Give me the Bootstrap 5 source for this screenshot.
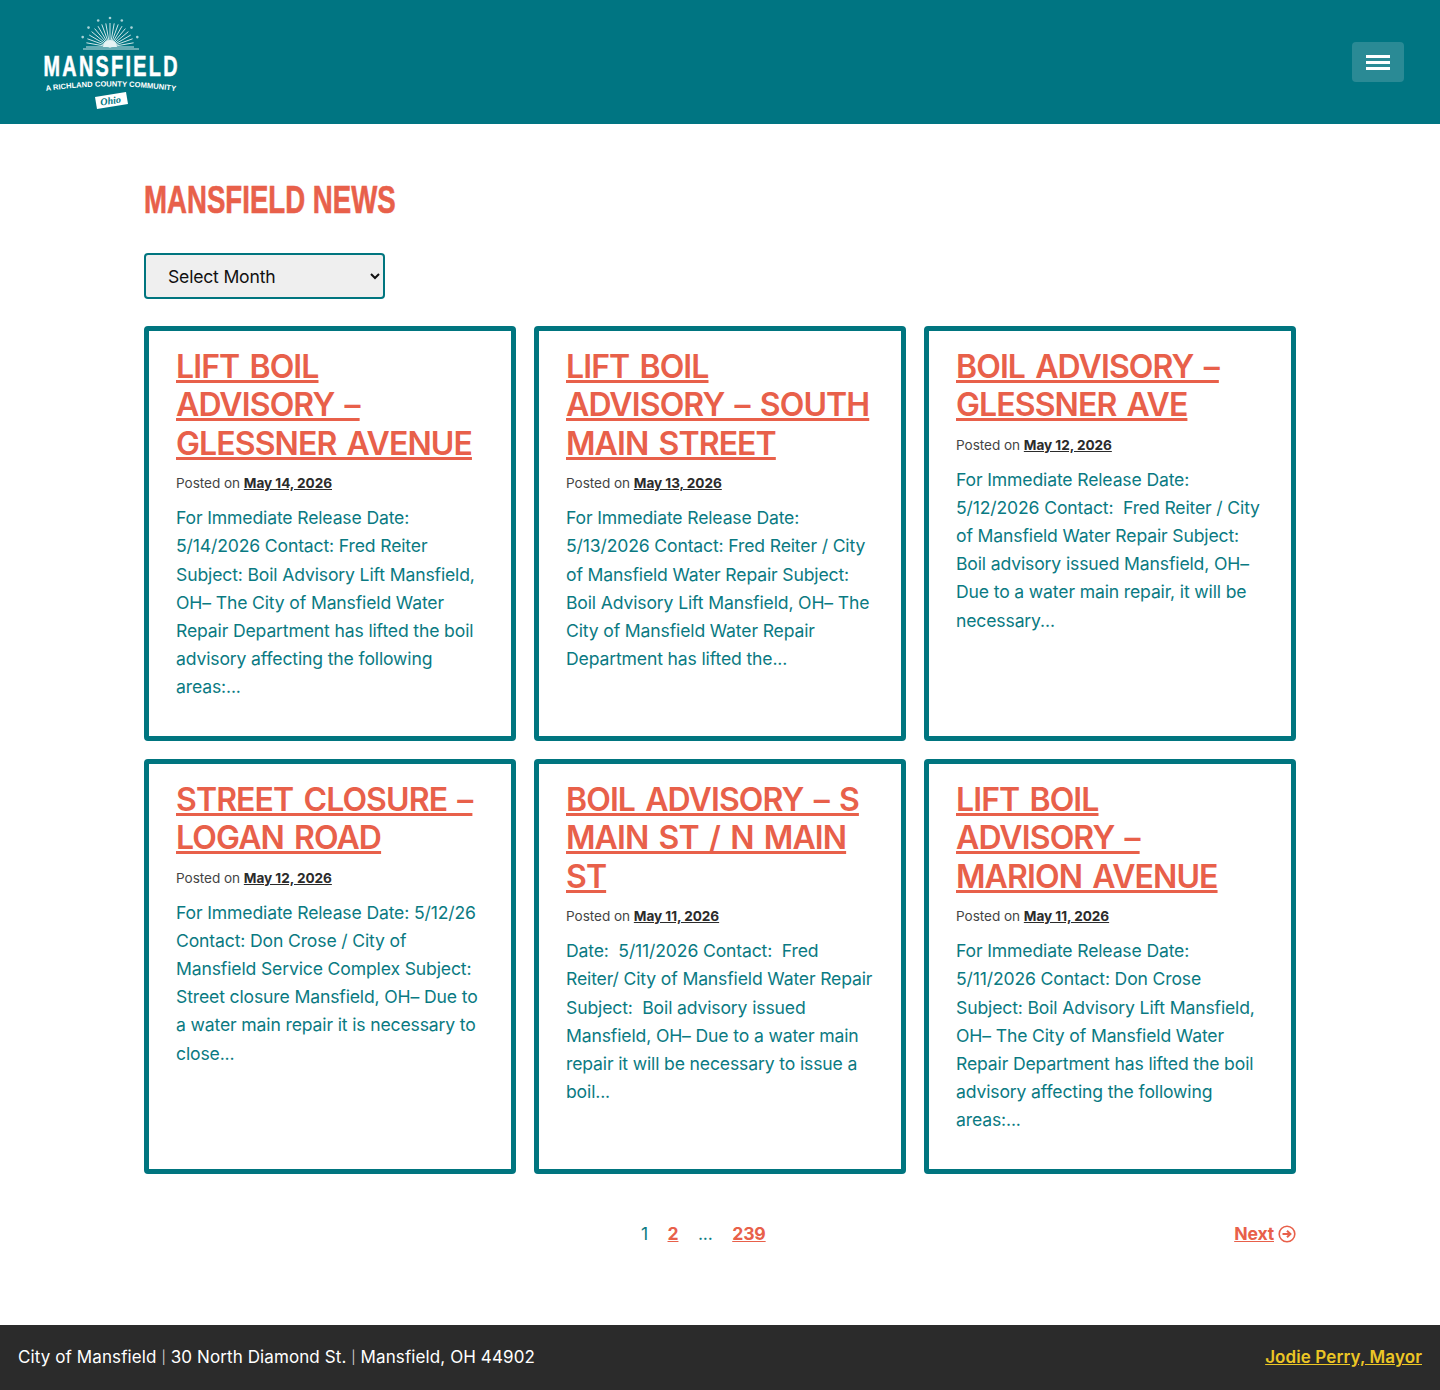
<!DOCTYPE html>
<html lang="en">
<head>
    <meta charset="UTF-8">
    <meta name="viewport" content="width=device-width, initial-scale=1.0">
    <title>Mansfield News</title>
    <link rel="stylesheet" href="https://cdn.jsdelivr.net/npm/bootstrap@5.3.3/dist/css/bootstrap.min.css">
    <style>
        body {
            font-family: "Inter", "Liberation Sans", sans-serif;
            font-size: 17.6px;
            line-height: 1.6;
            letter-spacing: -0.15px;
            color: #0a7a82;
        }
        .site-header {
            height: 124px;
            background-color: #007582;
            padding: 0 36px 0 43px;
        }
        .menu-btn {
            width: 52px;
            height: 40px;
            background-color: #2a8a95;
            border: 0;
            border-radius: 4px;
        }
        .menu-btn span {
            display: block;
            width: 24px;
            height: 3px;
            background-color: #fff;
            margin: 1.5px auto;
        }
        .logo { display: block; }
        .logo text { fill: #fff; letter-spacing: 0; }
        .main-wrap { width: 1152px; margin: 0 auto; padding-top: 54px; }
        h1.page-title {
            font-family: "Liberation Sans", sans-serif;
            font-weight: 700;
            font-size: 38px;
            line-height: 44px;
            letter-spacing: 0;
            color: #e8604a;
            margin: 0 0 31px;
            text-transform: uppercase;
            transform: scaleX(.727);
            transform-origin: left center;
            -webkit-text-stroke: .6px #e8604a;
        }
        .month-select {
            width: 241px;
            height: 46px;
            background-color: #efefef;
            border: 2px solid #00757f;
            border-radius: 4px;
            padding: 0 0 0 18px;
            font-size: 17.6px;
            letter-spacing: -0.2px;
            color: #111;
            display: block;
        }
        .news-grid {
            display: grid;
            grid-template-columns: repeat(3, 372px);
            grid-auto-rows: 415px;
            gap: 18px;
            margin-top: 27px;
        }
        .news-card {
            border: 5px solid #00757f;
            border-radius: 4px;
            padding: 17px 27px 0;
            background: #fff;
        }
        .news-card h2 {
            font-size: 32px;
            line-height: 38.4px;
            font-weight: 600;
            letter-spacing: -0.9px;
            word-spacing: 3px;
            margin: 0 0 9px;
            text-transform: uppercase;
        }
        .news-card h2 a, .pager a { color: #e8604a; }
        .meta {
            font-size: 13.6px;
            line-height: 22px;
            letter-spacing: -0.05px;
            color: #444;
            margin-bottom: 10px;
        }
        .meta a { color: #2b2b2b; font-weight: 700; }
        .news-card p { margin: 0; line-height: 28.16px; }
        .pager {
            height: 30px;
            margin-top: 45px;
            font-size: 17.6px;
            font-weight: 700;
        }
        .pager .pages { margin-left: 497px; gap: 19.5px; }
        .pager .pages span { font-weight: 400; }
        .site-footer {
            height: 65px;
            margin-top: 76px;
            background-color: #2b2b2b;
            color: #fff;
            font-size: 17px;
            letter-spacing: .1px;
            padding: 0 18px;
        }
        .site-footer .sep { font-size: 13px; color: #ccc; vertical-align: 1px; }
        .site-footer a { color: #ecc625; font-weight: 600; }
    </style>
</head>
<body>

    <header class="site-header d-flex justify-content-between align-items-center">
        <a href="#" class="logo">
            <svg width="138" height="96" viewBox="0 0 138 96">
                <g stroke="#cfe6e8" stroke-width="1" fill="none">
                    <path d="M67 33 L91 33 M67 33 L90.6 28.8 M67 33 L89.6 24.8 M67 33 L87.8 21 M67 33 L85.4 17.6 M67 33 L82.4 14.6 M67 33 L79 12.2 M67 33 L75.2 10.4 M67 33 L71.2 9.4 M67 33 L67 9 M67 33 L62.8 9.4 M67 33 L58.8 10.4 M67 33 L55 12.2 M67 33 L51.6 14.6 M67 33 L48.6 17.6 M67 33 L46.2 21 M67 33 L44.4 24.8 M67 33 L43.4 28.8 M67 33 L43 33"/>
                    <path d="M40 35 H96" stroke-width="1.2"/>
                </g>
                <g fill="#a9d3d7">
                    <circle cx="67" cy="4" r="1.3"/><circle cx="55.2" cy="6.5" r="1.3"/><circle cx="78.8" cy="6.5" r="1.3"/>
                    <circle cx="45.5" cy="13.6" r="1.3"/><circle cx="88.5" cy="13.6" r="1.3"/>
                    <circle cx="39.7" cy="23.1" r="1.3"/><circle cx="94.3" cy="23.1" r="1.3"/>
                </g>
                <path d="M60 33 a7 7 0 0 1 14 0 Z" fill="#e6f3f4"/>
                <text transform="translate(0.5 62) scale(.66 1)" font-family="Liberation Sans, sans-serif" font-weight="700" font-size="30" stroke="#fff" stroke-width=".6" style="letter-spacing:3.5px">MANSFIELD</text>
                <path id="logoArc" d="M3 77 Q67 68 132 77" fill="none"/>
                <text font-family="Liberation Sans, sans-serif" font-weight="700" font-size="7.6"><textPath href="#logoArc" startOffset="0">A RICHLAND COUNTY COMMUNITY</textPath></text>
                <path d="M52 83 L83 78 L85 90 L54 95 Z" fill="#fff"/>
                <text transform="rotate(-8 68 90)" x="68" y="90" text-anchor="middle" font-family="Liberation Serif, serif" font-style="italic" font-weight="700" font-size="10" style="fill:#007582">Ohio</text>
            </svg>
        </a>
        <button class="menu-btn d-flex flex-column justify-content-center" type="button" aria-label="Menu">
            <span></span><span></span><span></span>
        </button>
    </header>

    <main class="main-wrap">
        <h1 class="page-title">Mansfield News</h1>

        <select class="month-select">
            <option>Select Month</option>
        </select>

        <div class="news-grid">
            <article class="news-card">
                <h2><a href="#">Lift Boil Advisory – Glessner Avenue</a></h2>
                <div class="meta">Posted on <a href="#">May 14, 2026</a></div>
                <p>For Immediate Release Date: 5/14/2026 Contact: Fred Reiter Subject: Boil Advisory Lift Mansfield, OH– The City of Mansfield Water Repair Department has lifted the boil advisory affecting the following areas:...</p>
            </article>
            <article class="news-card">
                <h2><a href="#">Lift Boil Advisory – South Main Street</a></h2>
                <div class="meta">Posted on <a href="#">May 13, 2026</a></div>
                <p>For Immediate Release Date: 5/13/2026 Contact: Fred Reiter / City of Mansfield Water Repair Subject: Boil Advisory Lift Mansfield, OH– The City of Mansfield Water Repair Department has lifted the...</p>
            </article>
            <article class="news-card">
                <h2><a href="#">Boil Advisory – Glessner Ave</a></h2>
                <div class="meta">Posted on <a href="#">May 12, 2026</a></div>
                <p>For Immediate Release Date: 5/12/2026 Contact:&nbsp; Fred Reiter / City of Mansfield Water Repair Subject: Boil advisory issued Mansfield, OH– Due to a water main repair, it will be necessary...</p>
            </article>
            <article class="news-card">
                <h2><a href="#">Street Closure – Logan Road</a></h2>
                <div class="meta">Posted on <a href="#">May 12, 2026</a></div>
                <p>For Immediate Release Date: 5/12/26 Contact: Don Crose / City of Mansfield Service Complex Subject: Street closure Mansfield, OH– Due to a water main repair it is necessary to close...</p>
            </article>
            <article class="news-card">
                <h2><a href="#">Boil Advisory – S Main St / N Main St</a></h2>
                <div class="meta">Posted on <a href="#">May 11, 2026</a></div>
                <p>Date:&nbsp; 5/11/2026 Contact:&nbsp; Fred Reiter/ City of Mansfield Water Repair Subject:&nbsp; Boil advisory issued Mansfield, OH– Due to a water main repair it will be necessary to issue a boil...</p>
            </article>
            <article class="news-card">
                <h2><a href="#">Lift Boil Advisory – Marion Avenue</a></h2>
                <div class="meta">Posted on <a href="#">May 11, 2026</a></div>
                <p>For Immediate Release Date: 5/11/2026 Contact: Don Crose Subject: Boil Advisory Lift Mansfield, OH– The City of Mansfield Water Repair Department has lifted the boil advisory affecting the following areas:...</p>
            </article>
        </div>

        <nav class="pager d-flex justify-content-between align-items-center">
            <div class="pages d-flex">
                <span>1</span>
                <a href="#">2</a>
                <span>...</span>
                <a href="#">239</a>
            </div>
            <a href="#" class="d-flex align-items-center gap-1">Next
                <svg width="18" height="18" viewBox="0 0 18 18" fill="none" stroke="#e8604a" stroke-width="1.6"><circle cx="9" cy="9" r="7.8"/><path d="M4.5 9 H12 M9 5.8 L12.4 9 L9 12.2" stroke-width="2"/></svg>
            </a>
        </nav>
    </main>

    <footer class="site-footer d-flex justify-content-between align-items-center">
        <div>City of Mansfield <span class="sep">|</span> 30 North Diamond St. <span class="sep">|</span> Mansfield, OH 44902</div>
        <a href="#">Jodie Perry, Mayor</a>
    </footer>

    <script src="https://cdn.jsdelivr.net/npm/bootstrap@5.3.3/dist/js/bootstrap.bundle.min.js"></script>
</body>
</html>
